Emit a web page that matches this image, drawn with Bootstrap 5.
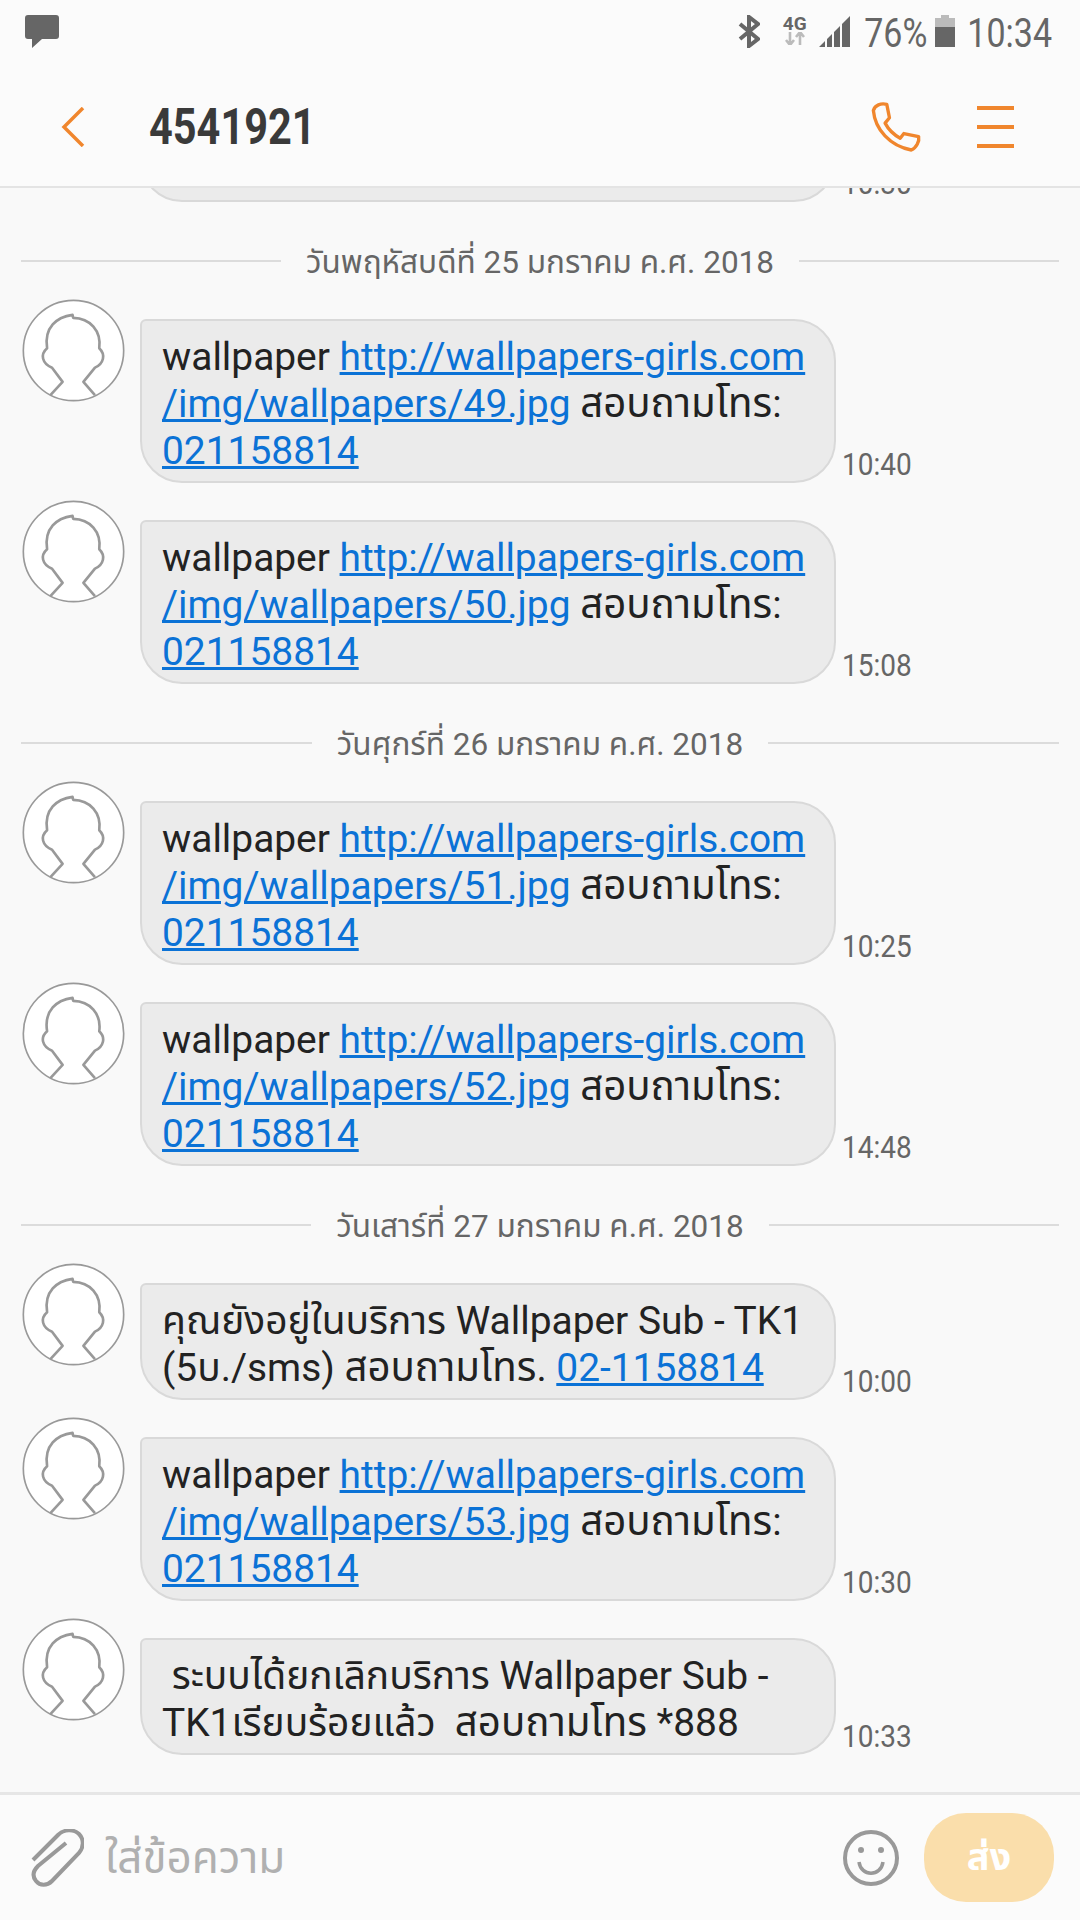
<!DOCTYPE html>
<html lang="th">
<head>
  <meta charset="UTF-8" />
  <title>4541921</title>
  <meta name="viewport" content="width=device-width, initial-scale=1.0" />
  <link href="https://cdn.jsdelivr.net/npm/bootstrap@5.3.0/dist/css/bootstrap.min.css" rel="stylesheet"/>
  <style>
    body {
      background-color: #f9f9f9;
      font-family: Roboto, "Noto Sans", "Noto Sans Thai", sans-serif;
    }

    .phone-screen {
      width: 1080px;
      height: 1920px;
    }

    /* Status bar + title */
    .top-area {
      height: 188px;
      flex: none;
      background: #fbfbfb;
      border-bottom: 2px solid #e4e4e4;
    }

    .status-row {
      height: 64px;
      padding: 15px 28px 0 25px;
      color: #666;
      font-size: 34px;
      line-height: 36px;
    }

    .status-text {
      display: inline-block;
      transform: scaleY(1.18);
    }

    .net-icon {
      width: 25px;
      margin: 0 12px 0 22px;
      font-size: 19px;
      line-height: 17px;
      font-weight: 700;
    }

    .signal-icon { margin-right: 14px; }
    .battery-icon { margin: 0 12px 0 8px; }

    .title-row {
      height: 122px;
      padding: 4px 66px 0 61px;
    }

    .thread-title {
      margin-left: 64px;
      font-size: 41.5px;
      font-weight: 700;
      color: #3a3a3a;
      display: inline-block;
      transform: scaleY(1.2);
    }

    .call-icon { margin-right: 55px; }

    /* Messages */
    .msg-list {
      padding-bottom: 20px;
      min-height: 0;
    }

    .msg-row {
      flex: none;
      padding-left: 22px;
      margin-bottom: 17px;
    }

    .msg-avatar {
      width: 103px;
      height: 103px;
      flex: none;
      margin-right: 15px;
    }

    .msg-bubble {
      width: 696px;
      margin-top: 20px;
      padding: 12px 20px 7px;
      background: #ebebeb;
      border: 2px solid #d9d9d9;
      border-radius: 6px 42px 42px 42px;
      font-size: 38.9px;
      line-height: 47px;
      color: #222;
      white-space: nowrap;
    }

    /* the message cut off under the title */
    .msg-bubble:empty {
      height: 164px;
    }

    .msg-bubble a {
      color: #0b72d6;
    }

    .thai-wide {
      font-size: 40.2px;
    }

    .msg-time {
      margin-left: 6px;
      font-size: 28px;
      line-height: 36px;
      color: #666;
      display: inline-block;
      transform: scaleY(1.15);
    }

    .date-row {
      flex: none;
      height: 40px;
      margin: 22px 21px 18px;
      gap: 25px;
      font-size: 31.5px;
      color: #666;
    }

    .date-row span {
      padding-top: 4px;
    }

    .date-line {
      flex: 1;
      height: 2px;
      background: #dcdcdc;
    }

    /* Compose bar */
    .compose-bar {
      height: 128px;
      flex: none;
      background: #fbfbfb;
      border-top: 3px solid #e6e6e6;
      padding: 0 26px 0 31px;
    }

    .compose-input {
      margin-left: 21px;
      font-size: 44px;
      color: #b0b0b0;
    }

    .send-btn {
      width: 130px;
      height: 89px;
      margin-left: 25px;
      border-radius: 42px;
      background: #fadeab;
      color: #fff;
      font-size: 38px;
      font-weight: 700;
    }
  </style>
</head>
<body class="m-0">

<svg width="0" height="0" class="position-absolute">
  <symbol id="avatar" viewBox="64 54 312 312">
    <circle cx="220" cy="210" r="152" fill="#fff" stroke="#999" stroke-width="5"/>
    <path d="M150 345 L187 305 L155 262 C125 250 118 222 140 203 C130 140 170 108 217 102 L219 111 C270 112 305 150 298 203 C318 222 312 250 285 262 L250 305 L285 345" fill="none" stroke="#999" stroke-width="8" stroke-linejoin="round"/>
  </symbol>
</svg>

<div class="phone-screen d-flex flex-column overflow-hidden">

  <!-- Status bar and title -->
  <div class="top-area">
    <div class="status-row d-flex align-items-start justify-content-between">
      <svg width="34" height="34" viewBox="0 0 34 34"><path d="M3 0H31Q34 0 34 3V21Q34 24 31 24H17L7 33V24H3Q0 24 0 21V3Q0 0 3 0Z" fill="#666"/></svg>
      <div class="d-flex align-items-start">
        <svg width="22" height="33" viewBox="0 0 22 33"><path d="M2 9L20 24L11 31V2L20 9L2 24" fill="none" stroke="#666" stroke-width="4"/></svg>
        <div class="net-icon d-flex flex-column align-items-center">
          <span>4G</span>
          <svg width="22" height="13" viewBox="0 0 22 13"><path d="M6 0V12M2 8L6 13L10 8M16 13V1M12 5L16 0L20 5" fill="none" stroke="#bbb" stroke-width="2.6"/></svg>
        </div>
        <svg width="31" height="32" viewBox="0 0 31 32" class="signal-icon"><path d="M0 32L6 26V32ZM8 24L13 19V32H8ZM15 17L21 11V32H15ZM23 9L31 1V32H23Z" fill="#666"/></svg>
        <span class="status-text">76%</span>
        <svg width="20" height="32" viewBox="0 0 20 32" class="battery-icon"><path d="M6 0H14V3H20V12H0V3H6Z" fill="#bbb"/><path d="M0 12H20V32H0Z" fill="#666"/></svg>
        <span class="status-text">10:34</span>
      </div>
    </div>
    <div class="title-row d-flex align-items-center">
      <svg width="24" height="40" viewBox="0 0 24 40"><path d="M22 1L3 20L22 39" fill="none" stroke="#f0862d" stroke-width="3.5"/></svg>
      <span class="thread-title">4541921</span>
      <svg width="52" height="52" viewBox="90 30 155 155" class="ms-auto call-icon"><path d="M100 58C105 42 122 36 140 40L148 80L135 96C145 115 160 130 180 141L191 127L235 136C238 150 228 170 213 176C150 165 105 115 100 58Z" fill="none" stroke="#f0862d" stroke-width="10" stroke-linejoin="round"/></svg>
      <svg width="37" height="42" viewBox="0 0 37 42"><path d="M0 0H37V4H0ZM0 19H37V23H0ZM0 38H37V42H0Z" fill="#f0862d"/></svg>
    </div>
  </div>

  <!-- Messages, pinned to the bottom and cut off by the title -->
  <div class="msg-list flex-grow-1 d-flex flex-column justify-content-end overflow-hidden" id="msgList"></div>

  <!-- Compose bar -->
  <div class="compose-bar d-flex align-items-center">
    <svg width="53" height="58" viewBox="0 0 53 58"><path d="M2 31L27 6C33 0 43 0 48 5C53 10 53 18 48 24L21 52C16 57 9 57 5 52C1 47 2 42 7 37L35 14" fill="none" stroke="#999" stroke-width="4"/></svg>
    <span class="compose-input">ใส่ข้อความ</span>
    <svg width="56" height="58" viewBox="0 0 56 58" class="ms-auto"><circle cx="28" cy="29" r="26" fill="none" stroke="#999" stroke-width="4"/><circle cx="18" cy="21" r="3" fill="#999"/><circle cx="38" cy="21" r="3" fill="#999"/><path d="M16 33C18 48 38 48 40 33" fill="none" stroke="#999" stroke-width="3.5"/></svg>
    <div class="send-btn d-flex align-items-center justify-content-center">ส่ง</div>
  </div>
</div>

<script src="https://cdn.jsdelivr.net/npm/bootstrap@5.3.0/dist/js/bootstrap.bundle.min.js"></script>
<script>
  const askThai = '<span class="thai-wide">สอบถามโทร</span>';
  const wallpaper = n => `wallpaper <a href="#">http://wallpapers-girls.com<br>/img/wallpapers/${n}.jpg</a> ${askThai}:<br><a href="#">021158814</a>`;

  const items = [
    { text: "", time: "10:30" },
    { date: "วันพฤหัสบดีที่ 25 มกราคม ค.ศ. 2018" },
    { text: wallpaper(49), time: "10:40" },
    { text: wallpaper(50), time: "15:08" },
    { date: "วันศุกร์ที่ 26 มกราคม ค.ศ. 2018" },
    { text: wallpaper(51), time: "10:25" },
    { text: wallpaper(52), time: "14:48" },
    { date: "วันเสาร์ที่ 27 มกราคม ค.ศ. 2018" },
    { text: `คุณยังอยู่ในบริการ Wallpaper Sub - TK1<br>(5บ./sms) ${askThai}. <a href="#">02-1158814</a>`, time: "10:00" },
    { text: wallpaper(53), time: "10:30" },
    { text: `&nbsp;ระบบได้ยกเลิกบริการ Wallpaper Sub -<br>TK1เรียบร้อยแล้ว &nbsp;${askThai} *888`, time: "10:33" }
  ];

  const list = document.getElementById("msgList");
  items.forEach(item => {
    const row = document.createElement("div");
    if (item.date) {
      row.className = "date-row d-flex align-items-center";
      row.innerHTML = `<div class="date-line"></div><span>${item.date}</span><div class="date-line"></div>`;
    } else {
      row.className = "msg-row d-flex align-items-end";
      row.innerHTML = `<svg class="msg-avatar align-self-start"><use href="#avatar"/></svg>
        <div class="msg-bubble">${item.text}</div>
        <span class="msg-time">${item.time}</span>`;
    }
    list.appendChild(row);
  });
</script>
</body>
</html>
